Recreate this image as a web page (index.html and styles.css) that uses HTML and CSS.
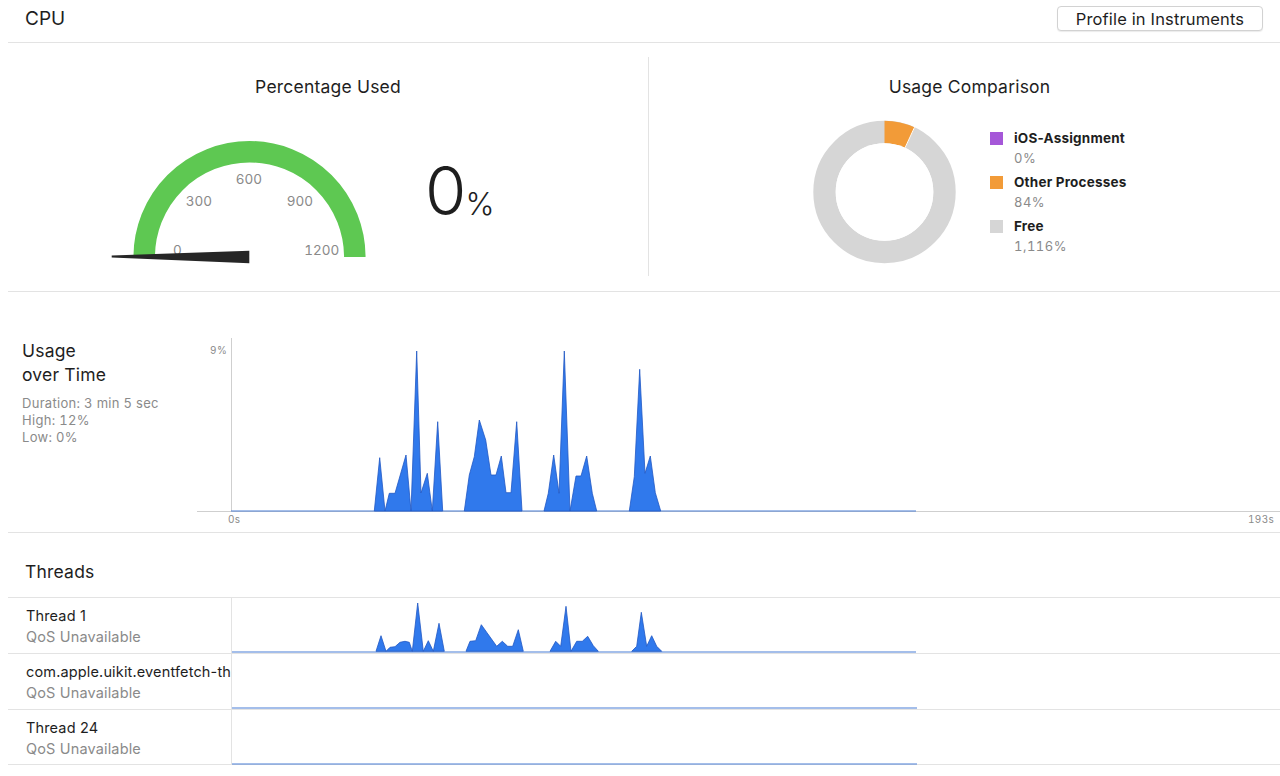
FILE: index.html
```html
<!DOCTYPE html>
<html>
<head>
<meta charset="utf-8">
<link rel="stylesheet" href="styles.css">
</head>
<body>
<header class="header">
  <div class="header-title">CPU</div>
  <button class="btn">Profile in Instruments</button>
</header>

<section class="overview">
  <div class="panel panel-left">
    <div class="panel-title">Percentage Used</div>
    <div class="gauge-row">
      <svg class="gauge" width="265" height="130" viewBox="105 135 265 130">
        <path d="M 144.2 257 A 105.3 105.3 0 0 1 354.8 257" fill="none" stroke="#5ec852" stroke-width="21.5"/>
        <g class="gauge-labels" font-size="13.5" fill="#8a8a8a" text-anchor="middle">
          <text x="177.5" y="255">0</text>
          <text x="199" y="205.5">300</text>
          <text x="249" y="184">600</text>
          <text x="300" y="205.5">900</text>
          <text x="321.7" y="255">1200</text>
        </g>
        <polygon points="111.7,255.6 249.3,250.7 249.3,263.3 111.7,257.6" fill="#262626"/>
      </svg>
      <div class="big-number"><span class="big-digit">0</span><span class="big-pct">%</span></div>
    </div>
  </div>
  <div class="panel panel-right">
    <div class="panel-title">Usage Comparison</div>
    <div class="donut-row">
      <svg class="donut" width="150" height="150" viewBox="810 118 150 150">
        <circle cx="884.5" cy="192" r="60" fill="none" stroke="#d6d6d6" stroke-width="22.4"/>
        <circle cx="884.5" cy="192" r="60" fill="none" stroke="#f29b38" stroke-width="22.4"
          stroke-dasharray="26.4 400" transform="rotate(-90 884.5 192)"/>
        <line x1="884.5" y1="192" x2="914.6" y2="127.2" stroke="#ffffff" stroke-width="1"/>
        <circle cx="884.5" cy="192" r="48.8" fill="#ffffff"/>
      </svg>
      <div class="legend">
        <div class="legend-item">
          <div class="legend-head"><span class="swatch swatch-purple"></span><span class="legend-name">iOS-Assignment</span></div>
          <div class="legend-value">0%</div>
        </div>
        <div class="legend-item">
          <div class="legend-head"><span class="swatch swatch-orange"></span><span class="legend-name">Other Processes</span></div>
          <div class="legend-value">84%</div>
        </div>
        <div class="legend-item">
          <div class="legend-head"><span class="swatch swatch-gray"></span><span class="legend-name">Free</span></div>
          <div class="legend-value">1,116%</div>
        </div>
      </div>
    </div>
  </div>
</section>

<section class="usage">
  <div class="usage-info">
    <div class="usage-title">Usage<br>over Time</div>
    <div class="usage-stats">
      <div>Duration: 3 min 5 sec</div>
      <div>High: 12%</div>
      <div>Low: 0%</div>
    </div>
  </div>
  <svg class="usage-chart" width="1083" height="200" viewBox="197 330 1083 200">
    <line x1="231.5" y1="338" x2="231.5" y2="511" stroke="#cfcfcf" stroke-width="1"/>
    <line x1="197" y1="511.5" x2="1280" y2="511.5" stroke="#cfcfcf" stroke-width="1"/>
    <text class="axis" x="227" y="354" text-anchor="end">9%</text>
    <text class="axis" x="228" y="523">0s</text>
    <text class="axis" x="1274" y="523" text-anchor="end">193s</text>
    <line x1="231" y1="511" x2="916" y2="511" stroke="#4a7fd6" stroke-width="1.2"/>
    <path class="area" d="M374.3 511 L379.7 457.7 L385 511 L389.3 493.3 L395 493.3 L406 455 L411 511 L416.7 351 L421 493 L427.3 473.3 L432.3 511 L437.7 421.7 L442.7 511 Z
      M464.3 511 L469.3 475 L474.3 456.7 L479.3 420 L485.7 440 L491 475 L496 475 L501.3 456 L506 492.7 L511 492.7 L516.7 421.7 L522 511 Z
      M544 511 L548.3 493.3 L553.7 455 L559 493.3 L564.3 351 L570 511 L576 476 L581 476 L586.7 456 L592.3 493.3 L596.7 511 Z
      M629.3 511 L634.3 476.7 L639.7 369.3 L645 473.3 L650.3 456 L655.3 492.7 L660.7 511 Z"/>
  </svg>
</section>

<section class="threads">
  <div class="threads-title">Threads</div>
  <div class="thread-row">
    <div class="thread-info">
      <div class="thread-name">Thread 1</div>
      <div class="thread-qos">QoS Unavailable</div>
    </div>
    <svg class="thread-chart" width="1048" height="55" viewBox="232 599 1048 55">
      <line x1="231" y1="653" x2="916" y2="653" stroke="#4a7fd6" stroke-width="1.2"/>
      <path class="area" d="M376 652.3 L381 636.7 L386 652.3 L390 648.3 L395 647.7 L400 643.3 L405 642.3 L409.3 643.3 L412.3 652.3 L417.7 604 L423.3 652.3 L428.3 641.7 L433.3 652.3 L439 624.3 L444.3 652.3 Z
        M466 652.3 L470 642.3 L475.7 641.7 L481.3 625.7 L486.7 633.3 L496.7 647.3 L502.3 642.3 L507.7 647.3 L512.7 647.3 L518.3 630.7 L523.3 652.3 Z
        M550 652.3 L555.7 642.3 L560.7 647.3 L566 607.3 L571 652.3 L576.7 642.3 L582.3 642.3 L587.7 637.3 L593.3 646.7 L598.3 652.3 Z
        M631.7 652.3 L636.7 647.3 L641.3 613.3 L646.7 647.3 L651.7 636.7 L656.7 647.3 L661.7 652.3 Z"/>
    </svg>
  </div>
  <div class="thread-row">
    <div class="thread-info">
      <div class="thread-name">com.apple.uikit.eventfetch-thread</div>
      <div class="thread-qos">QoS Unavailable</div>
    </div>
    <svg class="thread-chart" width="1048" height="55" viewBox="0 0 1048 55">
      <line x1="0" y1="54" x2="685" y2="54" stroke="#4a7fd6" stroke-width="1.2"/>
    </svg>
  </div>
  <div class="thread-row">
    <div class="thread-info">
      <div class="thread-name">Thread 24</div>
      <div class="thread-qos">QoS Unavailable</div>
    </div>
    <svg class="thread-chart" width="1048" height="55" viewBox="0 0 1048 55">
      <line x1="0" y1="54" x2="685" y2="54" stroke="#4a7fd6" stroke-width="1.2"/>
    </svg>
  </div>
</section>
</body>
</html>
```

FILE: styles.css
```css
* { box-sizing: border-box; }

html, body {
  margin: 0;
  padding: 0;
  background: #ffffff;
}

body {
  width: 1280px;
  height: 776px;
  overflow: hidden;
  font-family: "Inter", "Liberation Sans", sans-serif;
  color: #1e1e1e;
}

svg {
  display: block;
  font-family: "Inter", "Liberation Sans", sans-serif;
  font-variant-numeric: tabular-nums;
}

.axis {
  font-size: 10px;
  fill: #8a8a8a;
  letter-spacing: 0.3px;
}

.header {
  height: 43px;
  margin-left: 8px;
  padding: 6px 17px 0 17px;
  display: flex;
  justify-content: space-between;
  align-items: flex-start;
  border-bottom: 1px solid #e3e3e3;
}

.header-title {
  font-size: 19px;
  line-height: 25px;
}

.btn {
  height: 25px;
  width: 206px;
  padding: 0;
  font-family: "Inter", "Liberation Sans", sans-serif;
  font-size: 16.5px;
  letter-spacing: 0.15px;
  color: #1e1e1e;
  background: #ffffff;
  border: 1px solid #d2d2d2;
  border-radius: 4px;
  box-shadow: 0 1px 1px rgba(0,0,0,0.08);
}

.overview {
  height: 249px;
  margin-left: 8px;
  display: flex;
  border-bottom: 1px solid #e3e3e3;
}

.panel { flex: none; }

.panel-left { width: 640px; }

.panel-right {
  width: 632px;
  margin: 14px 0 15px 0;
  border-left: 1px solid #e3e3e3;
}

.panel-title {
  font-size: 17.5px;
  line-height: 20px;
  letter-spacing: 0.2px;
  text-align: center;
  margin-top: 34px;
}

.panel-right .panel-title { margin-top: 20px; padding-left: 10px; }

.gauge-row {
  display: flex;
  align-items: flex-start;
  margin-top: 38px;
  padding-left: 97px;
}

.big-number {
  margin-left: 55px;
  margin-top: 21px;
  display: flex;
  align-items: baseline;
}

.big-digit {
  font-size: 67px;
  font-weight: 300;
  line-height: 70px;
}

.big-pct {
  font-size: 31px;
  font-weight: 300;
  margin-left: -1px;
}

.donut-row {
  display: flex;
  align-items: flex-start;
  margin-top: 21px;
  padding-left: 161px;
}

.legend {
  margin-left: 30px;
  margin-top: 10px;
  display: flex;
  flex-direction: column;
  gap: 4px;
}

.legend-head {
  display: flex;
  align-items: center;
  height: 20px;
}

.swatch {
  width: 13px;
  height: 13px;
  margin-right: 11px;
}

.swatch-purple { background: #a557d8; }
.swatch-orange { background: #f29b38; }
.swatch-gray { background: #d6d6d6; }

.legend-name {
  font-size: 13.5px;
  font-weight: 700;
  letter-spacing: 0.2px;
  color: #1e1e1e;
}

.legend-value {
  font-size: 13px;
  line-height: 20px;
  letter-spacing: 0.5px;
  font-variant-numeric: tabular-nums;
  padding-left: 24px;
  color: #8a8a8a;
}

.usage {
  height: 241px;
  margin-left: 8px;
  display: flex;
  border-bottom: 1px solid #e3e3e3;
}

.usage-info {
  width: 189px;
  flex: none;
  padding: 47px 0 0 14px;
}

.usage-title {
  font-size: 17.5px;
  line-height: 24px;
  letter-spacing: 0.2px;
}

.usage-stats {
  margin-top: 8px;
  font-size: 13px;
  line-height: 17px;
  letter-spacing: 0.3px;
  font-variant-numeric: tabular-nums;
  color: #8a8a8a;
}

.usage-chart {
  flex: none;
  margin-top: 38px;
}

.area {
  fill: #3079ec;
  stroke: #2158c4;
  stroke-width: 0.8;
  stroke-linejoin: round;
}

.threads-title {
  font-size: 17.5px;
  line-height: 24px;
  letter-spacing: 0.2px;
  padding: 27px 0 0 25px;
  margin-bottom: 13px;
}

.thread-row {
  margin-left: 8px;
  height: 56px;
  display: flex;
  border-top: 1px solid #e3e3e3;
}

.thread-row:last-child { border-bottom: 1px solid #e3e3e3; }

.thread-info {
  width: 224px;
  flex: none;
  padding: 8px 0 0 18px;
  border-right: 1px solid #e3e3e3;
  overflow: hidden;
  white-space: nowrap;
}

.thread-name {
  font-size: 14.5px;
  line-height: 20px;
  letter-spacing: 0.15px;
}

.thread-qos {
  font-size: 14.5px;
  line-height: 21px;
  letter-spacing: 0.15px;
  color: #8a8a8a;
}

.thread-chart { flex: none; }
```
